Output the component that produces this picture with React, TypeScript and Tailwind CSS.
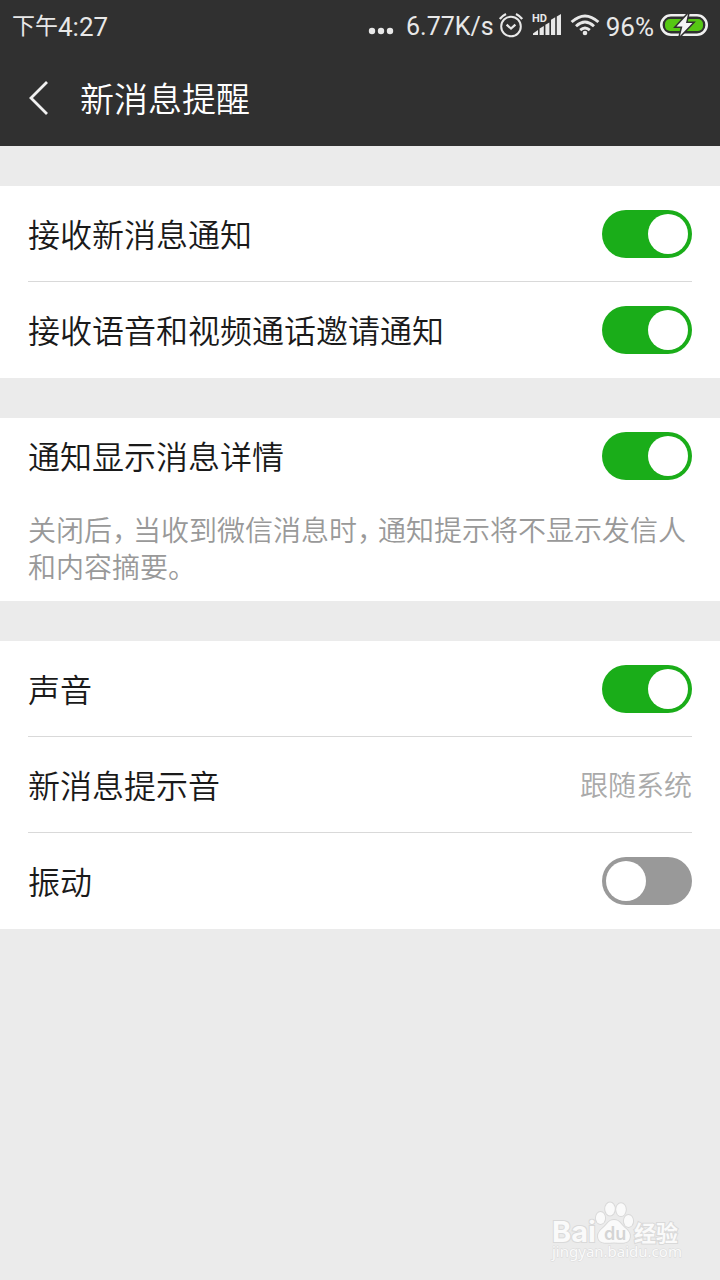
import { useState, type ReactNode } from "react";

function AlarmIcon() {
  return (
    <svg viewBox="0 0 26 28" className="h-7 w-[26px]" fill="none" stroke="#e8e8e8" strokeWidth="2" aria-hidden="true">
      <circle cx="13" cy="15.5" r="9.8" />
      <path d="M8.6 13.6 L13 17.6 L17.4 13.6" strokeWidth="2.2" />
      <path d="M1.8 8 Q4 5 8 3 M24.2 8 Q22 5 18 3" strokeWidth="2.2" />
    </svg>
  );
}

function SignalIcon() {
  return (
    <svg viewBox="0 0 30 24" className="h-6 w-[30px]" fill="#e8e8e8" aria-hidden="true">
      <text x="0" y="9" fontFamily="Roboto, sans-serif" fontWeight="700" fontSize="11">HD</text>
      <path d="M1 22 V20.5 L6 17 V22 Z" />
      <path d="M7.6 22 V15.4 L11.8 13 V22 Z" />
      <path d="M13.4 22 V11.8 L17.4 9.6 V22 Z" />
      <path d="M19 22 V6.8 L23.2 4.2 V22 Z" />
      <path d="M24.8 22 V3.4 L29 1 V22 Z" />
    </svg>
  );
}

function WifiIcon() {
  return (
    <svg viewBox="0 0 30 24" className="h-6 w-[30px]" fill="none" stroke="#e8e8e8" strokeWidth="2.9" aria-hidden="true">
      <path d="M1.6 9 Q15 -3.2 28.4 9" />
      <path d="M6 13.2 Q15 5 24 13.2" />
      <path d="M10.2 17.2 Q15 13 19.8 17.2" />
      <circle cx="15" cy="20" r="2.3" fill="#e8e8e8" stroke="none" />
    </svg>
  );
}

function BatteryIcon() {
  return (
    <svg viewBox="0 0 48 24" className="h-6 w-12" aria-hidden="true">
      <rect x="1.3" y="2.3" width="45.4" height="19.4" rx="9.7" fill="none" stroke="#f0f0f0" strokeWidth="2.6" />
      <rect x="5" y="6" width="38" height="12" rx="5" fill="#56c714" />
      <path d="M28 1 L16.5 13.4 H22.4 L20 23 L32.4 10 H26 Z" fill="#303030" stroke="#303030" strokeWidth="3" />
      <path d="M28 1 L16.5 13.4 H22.4 L20 23 L32.4 10 H26 Z" fill="#f4f4f4" />
    </svg>
  );
}

function StatusBar() {
  return (
    <div className="flex h-[50px] items-center justify-between px-3 pt-1 text-[26px] leading-8 font-normal text-[#e8e8e8]">
      <span className="flex items-center">
        <span className="text-[23px]">下午</span>
        <span>4:27</span>
      </span>
      <div className="flex items-center">
        <svg viewBox="0 0 26 8" className="mt-2 mr-3 h-2 w-[26px]" fill="#e8e8e8" aria-hidden="true">
          <circle cx="4" cy="4" r="3.2" />
          <circle cx="13" cy="4" r="3.2" />
          <circle cx="22" cy="4" r="3.2" />
        </svg>
        <span className="mr-1 text-[25px]">6.77K/s</span>
        <span className="mb-1"><AlarmIcon /></span>
        <span className="mb-1 ml-2"><SignalIcon /></span>
        <span className="mb-1 ml-2"><WifiIcon /></span>
        <span className="mx-1.5">96%</span>
        <span className="mb-1"><BatteryIcon /></span>
      </div>
    </div>
  );
}

function Switch({ id, initial }: { id: string; initial: boolean }) {
  const [on, setOn] = useState(initial);
  return (
    <input
      id={id}
      type="checkbox"
      role="switch"
      checked={on}
      onChange={(e) => setOn(e.target.checked)}
      className="h-12 w-[90px] shrink-0 cursor-pointer appearance-none rounded-full bg-[#999999] p-1 before:block before:size-10 before:rounded-full before:bg-white before:content-[''] checked:bg-[#1aad19] checked:before:translate-x-[42px]"
    />
  );
}

function SwitchRow({ id, label, initial, className }: { id: string; label: string; initial: boolean; className: string }) {
  return (
    <div className={`flex items-center justify-between ${className}`}>
      <label htmlFor={id} className="pt-1 text-[32px] leading-10 text-[#1a1a1a]">{label}</label>
      <Switch id={id} initial={initial} />
    </div>
  );
}

function Group({ children }: { children: ReactNode }) {
  return <section className="divide-y divide-[#d9d9d9] bg-white px-7">{children}</section>;
}

function Comma() {
  return <span className="mr-[7px] [font-feature-settings:'halt']">，</span>;
}

function Watermark() {
  return (
    <svg viewBox="0 0 132 64" className="absolute right-[38px] bottom-4 h-16 w-[132px]" fill="#fafafa" stroke="#d9d9d9" strokeWidth="2" paintOrder="stroke" aria-hidden="true">
      <text x="2" y="42" fontFamily="Inter, sans-serif" fontWeight="700" fontSize="29">Bai</text>
      <ellipse cx="50.5" cy="18" rx="4.6" ry="6" />
      <ellipse cx="60" cy="9" rx="4.8" ry="6.4" />
      <ellipse cx="71" cy="9.6" rx="4.8" ry="6.4" />
      <ellipse cx="78.5" cy="21" rx="4.6" ry="6" />
      <path d="M64 20 C58 20 57 25 53 28 C48 32 47 36 49 40 C52 44 58 42.5 64 42.5 C70 42.5 76 44 79 40 C81 36 80 32 75 28 C71 25 70 20 64 20 Z" />
      <text x="54" y="40" fontFamily="Inter, sans-serif" fontWeight="600" fontSize="18" fill="#d4d4d4" stroke="none">du</text>
      <text x="84" y="41" fontFamily="'Noto Sans CJK SC', sans-serif" fontWeight="700" fontSize="22">经验</text>
      <text x="2" y="57" fontFamily="'Noto Sans', sans-serif" fontWeight="400" fontSize="15" strokeWidth="1">jingyan.baidu.com</text>
    </svg>
  );
}

export default function App() {
  return (
    <div className="relative min-h-screen bg-[#ebebeb] font-['Roboto','Noto_Sans_CJK_SC',sans-serif] font-[350]">
      <header className="bg-[#303030]">
        <StatusBar />
        <div className="flex h-24 items-center pl-7">
          <button type="button" aria-label="返回" className="mr-8 cursor-pointer">
            <svg viewBox="0 0 20 36" className="h-9 w-5" fill="none" stroke="#f0f0f0" strokeWidth="2.8" aria-hidden="true">
              <path d="M19 2 L3 18 L19 34" />
            </svg>
          </button>
          <h1 className="pt-1 text-[34px] leading-10 font-[350] text-white">新消息提醒</h1>
        </div>
      </header>
      <main className="flex flex-col gap-10 py-10">
        <Group>
          <SwitchRow id="message" label="接收新消息通知" initial={true} className="h-24" />
          <SwitchRow id="call" label="接收语音和视频通话邀请通知" initial={true} className="h-24" />
        </Group>
        <Group>
          <div className="pb-3.5">
            <SwitchRow id="detail" label="通知显示消息详情" initial={true} className="h-[76px]" />
            <p className="pt-[19px] text-[28px] leading-[37px] text-[#999999]">
              关闭后<Comma />当收到微信消息时<Comma />通知提示将不显示发信人和内容摘要。
            </p>
          </div>
        </Group>
        <Group>
          <SwitchRow id="sound" label="声音" initial={true} className="h-24" />
          <button type="button" className="flex h-24 w-full cursor-pointer items-center justify-between text-left">
            <span className="pt-1 text-[32px] leading-10 text-[#1a1a1a]">新消息提示音</span>
            <span className="pt-1 text-[28px] leading-10 text-[#aaaaaa]">跟随系统</span>
          </button>
          <SwitchRow id="vibrate" label="振动" initial={false} className="h-24" />
        </Group>
      </main>
      <Watermark />
    </div>
  );
}
